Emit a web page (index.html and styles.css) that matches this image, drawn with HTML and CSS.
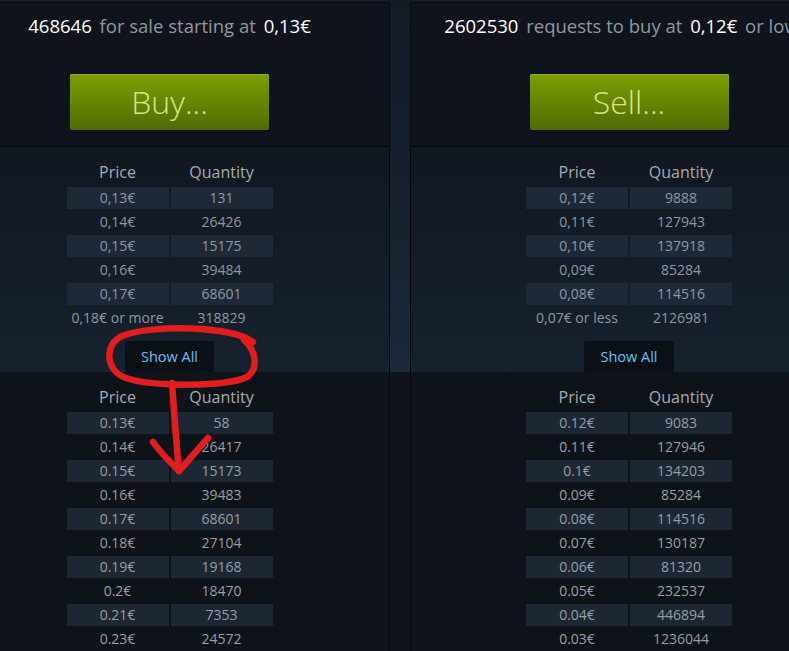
FILE: index.html
```html
<!DOCTYPE html>
<html lang="en">
<head>
<meta charset="utf-8">
<title>Market orders</title>
<link rel="stylesheet" href="styles.css">
</head>
<body>
<div class="page">
  <div class="upper">
    <section class="panel">
      <div class="panel-top">
        <div class="headline"><span class="promote">468646</span> for sale starting at <span class="promote">0,13€</span></div>
        <a class="btn-green">Buy...</a>
      </div>
      <div class="orders">
        <div class="orders-table">
          <div class="th">Price</div><div class="th">Quantity</div>
          <div class="td s">0,13€</div><div class="td s">131</div>
          <div class="td">0,14€</div><div class="td">26426</div>
          <div class="td s">0,15€</div><div class="td s">15175</div>
          <div class="td">0,16€</div><div class="td">39484</div>
          <div class="td s">0,17€</div><div class="td s">68601</div>
          <div class="td">0,18€ or more</div><div class="td">318829</div>
        </div>
        <a class="show-all">Show All</a>
      </div>
    </section>
    <section class="panel panel-right">
      <div class="panel-top">
        <div class="headline"><span class="promote">2602530</span> requests to buy at <span class="promote">0,12€</span> or lower</div>
        <a class="btn-green">Sell...</a>
      </div>
      <div class="orders">
        <div class="orders-table">
          <div class="th">Price</div><div class="th">Quantity</div>
          <div class="td s">0,12€</div><div class="td s">9888</div>
          <div class="td">0,11€</div><div class="td">127943</div>
          <div class="td s">0,10€</div><div class="td s">137918</div>
          <div class="td">0,09€</div><div class="td">85284</div>
          <div class="td s">0,08€</div><div class="td s">114516</div>
          <div class="td">0,07€ or less</div><div class="td">2126981</div>
        </div>
        <a class="show-all">Show All</a>
      </div>
    </section>
  </div>
  <div class="lower">
    <section class="panel">
      <div class="orders orders-full">
        <div class="orders-table">
          <div class="th">Price</div><div class="th">Quantity</div>
          <div class="td s">0.13€</div><div class="td s">58</div>
          <div class="td">0.14€</div><div class="td">26417</div>
          <div class="td s">0.15€</div><div class="td s">15173</div>
          <div class="td">0.16€</div><div class="td">39483</div>
          <div class="td s">0.17€</div><div class="td s">68601</div>
          <div class="td">0.18€</div><div class="td">27104</div>
          <div class="td s">0.19€</div><div class="td s">19168</div>
          <div class="td">0.2€</div><div class="td">18470</div>
          <div class="td s">0.21€</div><div class="td s">7353</div>
          <div class="td">0.23€</div><div class="td">24572</div>
        </div>
      </div>
    </section>
    <section class="panel panel-right">
      <div class="orders orders-full">
        <div class="orders-table">
          <div class="th">Price</div><div class="th">Quantity</div>
          <div class="td s">0.12€</div><div class="td s">9083</div>
          <div class="td">0.11€</div><div class="td">127946</div>
          <div class="td s">0.1€</div><div class="td s">134203</div>
          <div class="td">0.09€</div><div class="td">85284</div>
          <div class="td s">0.08€</div><div class="td s">114516</div>
          <div class="td">0.07€</div><div class="td">130187</div>
          <div class="td s">0.06€</div><div class="td s">81320</div>
          <div class="td">0.05€</div><div class="td">232537</div>
          <div class="td s">0.04€</div><div class="td s">446894</div>
          <div class="td">0.03€</div><div class="td">1236044</div>
        </div>
      </div>
    </section>
  </div>
  <svg class="annotation" width="789" height="651" viewBox="0 0 789 651" aria-hidden="true">
    <path d="M 253 342 C 232 326, 152 324, 122 336 C 104 344, 105 371, 126 378 C 152 387, 226 387, 247 377 C 259 369, 256 350, 244 340" />
    <path d="M 172 383 C 174 410, 176 440, 179 471" />
    <path d="M 153 442 C 160 452, 170 462, 179 471 L 208 438" />
  </svg>
</div>
</body>
</html>
```
FILE: styles.css
```css
html, body {
  margin: 0;
  padding: 0;
  overflow: hidden;
  width: 789px;
  height: 651px;
}
body {
  font-family: "Open Sans", "Liberation Sans", sans-serif;
  background: #0d1117;
}
.page {
  position: relative;
  width: 789px;
  height: 651px;
  overflow: hidden;
}
.upper {
  display: flex;
  gap: 20px;
  margin-left: -51px;
  padding-top: 2px;
  background: linear-gradient(to bottom, #121a25 0%, #17222f 60%, #1b2939 100%);
}
.lower {
  display: flex;
  gap: 20px;
  margin-left: -51px;
  background: #0e1319;
}
.panel {
  width: 441px;
  flex: none;
  box-sizing: border-box;
  border-left: 1px solid #05070a;
  border-right: 1px solid #05070a;
}
.panel-right {
  width: 438px;
}
.panel-top {
  box-sizing: border-box;
  height: 145px;
  border-top: 1px solid #05070a;
  border-bottom: 1px solid #05070a;
  background: #0f141c;
  padding-top: 11px;
  text-align: center;
}
.headline {
  font-size: 18.5px;
  line-height: 24px;
  color: #8f98a0;
  white-space: nowrap;
}
.promote {
  color: #ffffff;
  padding: 0 3px;
}
.btn-green {
  display: block;
  box-sizing: border-box;
  width: 199px;
  height: 56px;
  margin: 36px auto 0;
  border-radius: 2px;
  background: linear-gradient(to bottom, #7c9d04 5%, #546c04 95%);
  box-shadow: inset 0 1px 0 #8cb20c;
  color: #d2e885;
  font-size: 32px;
  font-weight: 300;
  line-height: 56px;
  text-align: center;
}
.orders {
  box-sizing: border-box;
  height: 225px;
  padding-top: 13px;
  background: linear-gradient(to bottom, #10171f 0%, #131c27 50%, #17222f 100%);
}
.orders-full {
  height: 279px;
  background: #0e1319;
}
.orders-table {
  display: grid;
  grid-template-columns: 102px 102px;
  grid-template-rows: 25px;
  grid-auto-rows: 22px;
  gap: 2px;
  justify-content: center;
}
.th {
  font-size: 16px;
  line-height: 25px;
  text-align: center;
  color: #a3abb3;
}
.td {
  font-size: 14px;
  line-height: 22px;
  text-align: center;
  color: #8f98a0;
  white-space: nowrap;
}
.td.s {
  background: #1e2937;
}
.orders-full .td {
  color: #979ea5;
}
.orders-full .td.s {
  background: #1d2734;
}
.show-all {
  display: block;
  width: fit-content;
  height: 31px;
  margin: 12px auto 0;
  padding: 0 16px;
  border-radius: 2px;
  background: #0b1016;
  color: #66c0f4;
  font-size: 14.5px;
  line-height: 31px;
}
.annotation {
  position: absolute;
  left: 0;
  top: 0;
  pointer-events: none;
}
.annotation path {
  fill: none;
  stroke: #e21d1d;
  stroke-width: 6.5;
  stroke-linecap: round;
  stroke-linejoin: round;
}
```
